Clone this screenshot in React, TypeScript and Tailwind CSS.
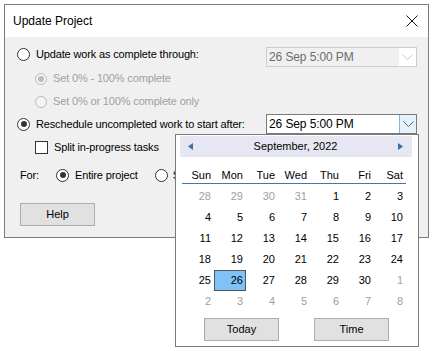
import React from "react";

function Radio({ checked = false, disabled = false, small = false }: { checked?: boolean; disabled?: boolean; small?: boolean }) {
  const size = small ? "w-[12px] h-[12px]" : "w-[13px] h-[13px]";
  const ring = disabled ? "border-[#bcbcbc] bg-[#f4f4f4]" : "border-[#333333] bg-white";
  const dot = disabled ? "bg-[#bcbcbc]" : "bg-[#333333]";
  return (
    <span className={`${size} ${ring} shrink-0 rounded-full border flex items-center justify-center`}>
      {checked && <span className={`w-[6px] h-[6px] rounded-full ${dot}`} />}
    </span>
  );
}

function Chevron({ color }: { color: string }) {
  return (
    <svg width="11" height="6" viewBox="0 0 11 6">
      <path d="M0.5 0.5 L5.5 5.5 L10.5 0.5" stroke={color} strokeWidth="1" fill="none" />
    </svg>
  );
}

function Combo({ disabled = false }: { disabled?: boolean }) {
  return (
    <div
      className={
        disabled
          ? "w-[151px] h-[20px] border border-[#cccccc] bg-[#f0f0f0] flex"
          : "w-[151px] h-[20px] border border-[#7a7a7a] bg-white flex"
      }
    >
      <div className={disabled ? "flex-1 flex items-center pl-[2px] text-[#6d6d6d]" : "flex-1 flex items-center pl-[2px] text-black"}>
        <span className="text-[12px] tracking-[-0.1px]">26 Sep 5:00 PM</span>
      </div>
      <div
        className={
          disabled
            ? "w-[17px] h-full bg-white flex items-center justify-center"
            : "w-[17px] h-full bg-[#e5f1fb] border-l border-[#7eb4ea] flex items-center justify-center"
        }
      >
        <Chevron color={disabled ? "#c8c8c8" : "#606060"} />
      </div>
    </div>
  );
}

const rows: [number, boolean][][] = [
  [[28, false], [29, false], [30, false], [31, false], [1, true], [2, true], [3, true]],
  [[4, true], [5, true], [6, true], [7, true], [8, true], [9, true], [10, true]],
  [[11, true], [12, true], [13, true], [14, true], [15, true], [16, true], [17, true]],
  [[18, true], [19, true], [20, true], [21, true], [22, true], [23, true], [24, true]],
  [[25, true], [26, true], [27, true], [28, true], [29, true], [30, true], [1, false]],
  [[2, false], [3, false], [4, false], [5, false], [6, false], [7, false], [8, false]],
];

const dayNames = ["Sun", "Mon", "Tue", "Wed", "Thu", "Fri", "Sat"];

function Calendar() {
  return (
    <div className="absolute left-[175px] top-[134px] w-[244px] h-[213px] border border-[#7a7a7a] bg-white flex flex-col">
      <div className="ml-[4px] mt-[1px] w-[232px] h-[21px] bg-[#e6e7f2] flex items-center justify-between pl-[8px] pr-[9px]">
        <svg width="5" height="7" viewBox="0 0 5 7">
          <polygon points="0,3.5 5,0 5,7" fill="#3a6ea5" />
        </svg>
        <span className="text-[11px] text-black">September, 2022</span>
        <svg width="5" height="7" viewBox="0 0 5 7">
          <polygon points="5,3.5 0,0 0,7" fill="#3a6ea5" />
        </svg>
      </div>
      <div className="ml-[6px] mt-[11px] w-[224px] h-[16px] border-b border-[#3c78b4] grid grid-cols-7">
        {dayNames.map((d) => (
          <div key={d} className="flex items-center justify-end pr-[3px] text-[11px] text-black leading-none h-[15px]">
            {d}
          </div>
        ))}
      </div>
      <div className="ml-[6px] mt-[2px] w-[224px] flex flex-col">
        {rows.map((r, i) => (
          <div key={i} className="grid grid-cols-7 h-[21px]">
            {r.map(([n, cur], j) => {
              const sel = i === 4 && j === 1;
              return (
                <div
                  key={j}
                  className={
                    sel
                      ? "flex items-center justify-end pr-[2px] text-[11px] tabular-nums bg-[#7fc2f8] border border-[#555555] text-black"
                      : cur
                      ? "flex items-center justify-end pr-[3px] text-[11px] tabular-nums text-black"
                      : "flex items-center justify-end pr-[3px] text-[11px] tabular-nums text-[#a0a0a0]"
                  }
                >
                  {n}
                </div>
              );
            })}
          </div>
        ))}
      </div>
      <div className="mt-[6px] ml-[28px] flex gap-[35px]">
        <div className="w-[75px] h-[23px] bg-[#e1e1e1] border border-[#adadad] flex items-center justify-center text-[11px] text-black">
          Today
        </div>
        <div className="w-[75px] h-[23px] bg-[#e1e1e1] border border-[#adadad] flex items-center justify-center text-[11px] text-black">
          Time
        </div>
      </div>
    </div>
  );
}

export default function App() {
  return (
    <div className="relative w-[432px] h-[351px] bg-white font-['Liberation_Sans',Arial,sans-serif] overflow-hidden">
      <div className="ml-[4px] mt-[4px] w-[425px] h-[234px] border border-[#7a7a7a] flex flex-col">
        <div className="h-[32px] bg-white flex items-center justify-between pl-[8px] pr-[9px] shrink-0">
          <span className="text-[12px] text-black">Update Project</span>
          <svg width="12" height="12" viewBox="0 0 12 12" className="mr-[1px]">
            <path d="M0.5 0.5 L11.5 11.5 M11.5 0.5 L0.5 11.5" stroke="#111" strokeWidth="1" />
          </svg>
        </div>
        <div className="flex-1 bg-[#f0f0f0] text-[11px] tracking-[-0.15px] text-black">
          <div className="mt-[7px] h-[23px] flex items-start pl-[12px] pr-[11px]">
            <div className="h-[21px] flex items-center gap-[6px]">
              <Radio />
              <span>Update work as complete through:</span>
            </div>
            <div className="ml-auto mt-[3px]">
              <Combo disabled />
            </div>
          </div>
          <div className="h-[23px] flex items-center pl-[30px] gap-[6px] text-[#a0a0a0]">
            <Radio small checked disabled />
            <span>Set 0% - 100% complete</span>
          </div>
          <div className="h-[23px] flex items-center pl-[30px] gap-[6px] text-[#a0a0a0]">
            <Radio small disabled />
            <span>Set 0% or 100% complete only</span>
          </div>
          <div className="h-[22px] flex items-center pl-[12px] pr-[11px]">
            <div className="flex items-center gap-[6px]">
              <Radio checked />
              <span>Reschedule uncompleted work to start after:</span>
            </div>
            <div className="ml-auto">
              <Combo />
            </div>
          </div>
          <div className="h-[24px] flex items-center pl-[30px] gap-[6px]">
            <span className="w-[13px] h-[13px] border border-[#333333] bg-white shrink-0" />
            <span>Split in-progress tasks</span>
          </div>
          <div className="h-[32px] flex items-center pl-[15px]">
            <span className="w-[36px]">For:</span>
            <div className="flex items-center gap-[6px]">
              <Radio checked />
              <span>Entire project</span>
            </div>
            <div className="flex items-center gap-[5px] ml-[17px]">
              <Radio />
              <span className="w-[6px] overflow-hidden whitespace-nowrap">Selected tasks</span>
            </div>
          </div>
          <div className="mt-[12px] pl-[15px]">
            <div className="w-[75px] h-[23px] bg-[#e1e1e1] border border-[#adadad] flex items-center justify-center tracking-normal">
              Help
            </div>
          </div>
        </div>
      </div>
      <Calendar />
    </div>
  );
}
